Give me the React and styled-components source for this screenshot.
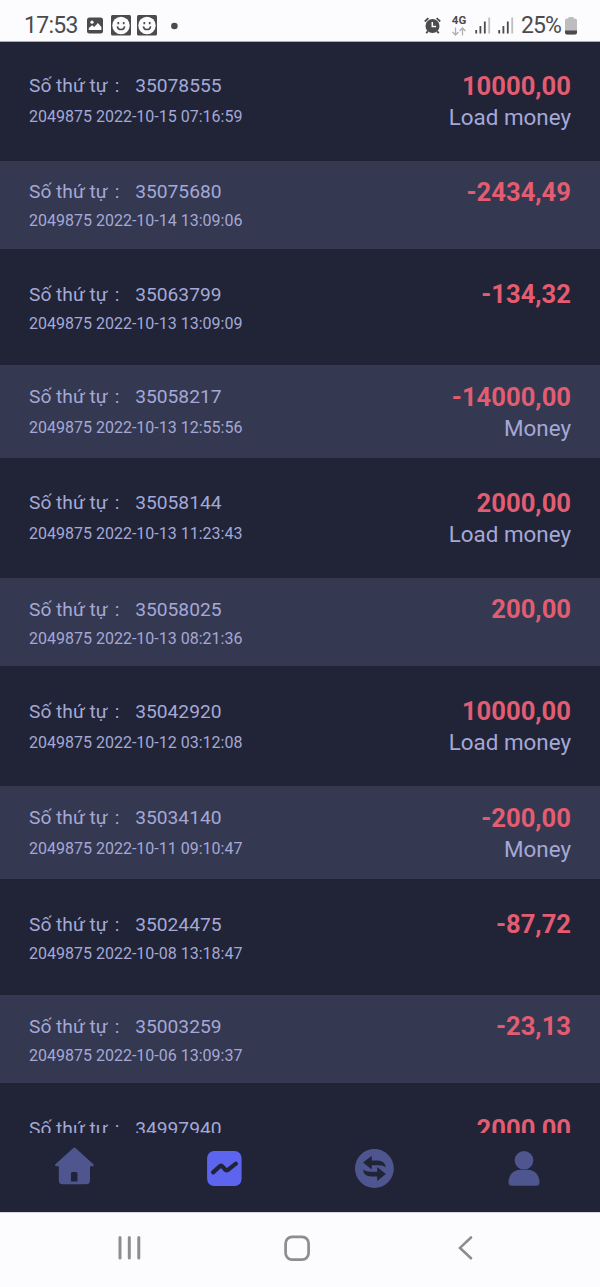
import React from 'react';
import styled, { createGlobalStyle } from 'styled-components';

const GlobalStyle = createGlobalStyle`
  * {
    box-sizing: border-box;
  }
  body {
    margin: 0;
    background-color: #202436;
    font-family: Roboto, 'Noto Sans CJK TC', sans-serif;
  }
`;

const Screen = styled.div`
  display: flex;
  flex-direction: column;
  width: 600px;
  height: 1287px;
  overflow: hidden;
  background-color: #202436;
`;

const StatusBar = styled.header`
  display: flex;
  justify-content: space-between;
  flex: none;
  height: 42px;
  padding: 9px 23px 0 24px;
  background-color: #fcfcfe;
  border-bottom: 1px solid #a9a9b3;
  color: #4b4b4d;
`;

const StatusGroup = styled.div`
  display: flex;
  align-items: center;
  height: 33px;
`;

const Clock = styled.span`
  width: 62px;
  font-size: 23px;
  line-height: 33px;
  letter-spacing: -0.7px;
  white-space: nowrap;
`;

const Battery = styled.span`
  margin-left: 7px;
  width: 43px;
  font-size: 23px;
  line-height: 33px;
  letter-spacing: -0.9px;
  white-space: nowrap;
`;

const StatusIcon = styled.svg`
  display: block;
  flex: none;
  margin-left: ${({ $gap }) => $gap || 0}px;
`;

const Network = styled.div`
  display: flex;
  flex-direction: column;
  align-items: center;
  gap: 1px;
  width: 16px;
  margin-left: 10px;
  font-size: 11.5px;
  font-weight: 700;
  line-height: 11px;
`;

const List = styled.ul`
  flex: none;
  height: 1091px;
  margin: 0;
  padding: 0;
  overflow: hidden;
  list-style: none;
`;

const ListItem = styled.li`
  display: flow-root;
  height: ${({ $tall }) => ($tall ? 92.3 : 88.3)}px;
  margin: ${({ $lit }) => ($lit ? '0' : '14px 0')};
  padding: 14.3px 29px 0;
  background-color: ${({ $lit }) => ($lit ? '#343850' : 'transparent')};
  color: #a5a8d6;

  &:first-child {
    margin-top: 12.4px;
  }
`;

const Line = styled.div`
  display: flex;
  align-items: center;
  justify-content: space-between;
  height: ${({ $height }) => $height}px;
  white-space: pre;
`;

const OrderNumber = styled.span`
  display: flex;
  padding-top: 1px;
  font-size: 19.2px;
  line-height: 28px;
`;

const Colon = styled.span`
  width: 27.5px;
  padding-left: 7px;
`;

const OrderDate = styled.span`
  padding-top: 1px;
  font-size: 16px;
  line-height: 20px;
`;

const Amount = styled.span`
  color: #e25d71;
  font-size: 25.6px;
  font-weight: 700;
  line-height: 30px;
`;

const Kind = styled.span`
  font-size: 22.4px;
  line-height: 26px;
`;

const TabBar = styled.nav`
  display: grid;
  grid-template-columns: repeat(4, 1fr);
  justify-items: center;
  flex: none;
  height: 79px;
  padding-top: 13px;
`;

const SystemBar = styled.footer`
  display: flex;
  align-items: center;
  flex: 1;
  padding: 0 0 4px 109px;
  background-color: #fcfcfe;
  border-top: 1px solid #d5d7e4;
`;

const SystemIcon = styled.svg`
  flex: none;
  margin-right: ${({ $gap }) => $gap || 0}px;
`;

const orders = [
  { id: '35078555', date: '2022-10-15 07:16:59', amount: '10000,00', kind: 'Load money' },
  { id: '35075680', date: '2022-10-14 13:09:06', amount: '-2434,49' },
  { id: '35063799', date: '2022-10-13 13:09:09', amount: '-134,32' },
  { id: '35058217', date: '2022-10-13 12:55:56', amount: '-14000,00', kind: 'Money' },
  { id: '35058144', date: '2022-10-13 11:23:43', amount: '2000,00', kind: 'Load money' },
  { id: '35058025', date: '2022-10-13 08:21:36', amount: '200,00' },
  { id: '35042920', date: '2022-10-12 03:12:08', amount: '10000,00', kind: 'Load money' },
  { id: '35034140', date: '2022-10-11 09:10:47', amount: '-200,00', kind: 'Money' },
  { id: '35024475', date: '2022-10-08 13:18:47', amount: '-87,72' },
  { id: '35003259', date: '2022-10-06 13:09:37', amount: '-23,13' },
  { id: '34997940', amount: '2000,00' },
];

function SmileIcon({ gap }) {
  return (
    <StatusIcon $gap={gap} width='20' height='21' viewBox='0 0 20 21'>
      <rect width='20' height='20.5' rx='1.5' fill='#4b4b4d' />
      <circle cx='10' cy='10.5' r='8.7' fill='#fcfcfe' />
      <path d='M7.3 7v2.2M12.7 7v2.2' stroke='#4b4b4d' strokeWidth='1.7' />
      <path d='M6.4 11.3c.6 4.3 6.6 4.3 7.2 0' fill='none' stroke='#4b4b4d' strokeWidth='1.6' />
    </StatusIcon>
  );
}

function SignalIcon({ gap }) {
  return (
    <StatusIcon $gap={gap} width='16' height='17' viewBox='0 0 16 17'>
      <path d='M1.2 13v3.5M5.4 9v7.5M9.8 4.5v12' stroke='#4b4b4d' strokeWidth='1.8' />
      <path d='M14.2.5v16' stroke='#bdbdc0' strokeWidth='1.8' />
    </StatusIcon>
  );
}

function Status() {
  return (
    <StatusBar>
      <StatusGroup>
        <Clock>17:53</Clock>
        <StatusIcon $gap={1} width='16' height='17' viewBox='0 0 16 17'>
          <rect y='.5' width='16' height='16' rx='2.5' fill='#4b4b4d' />
          <circle cx='5' cy='5.2' r='1.6' fill='#fcfcfe' />
          <path d='M1.8 13V11l3.4-2.8 2 1.8 3.7-4.1 3.5 4V13z' fill='#fcfcfe' />
        </StatusIcon>
        <SmileIcon gap={8} />
        <SmileIcon gap={6} />
        <StatusIcon $gap={14} width='7' height='8' viewBox='0 0 7 8'>
          <circle cx='3.4' cy='4' r='3.3' fill='#4b4b4d' />
        </StatusIcon>
      </StatusGroup>
      <StatusGroup>
        <StatusIcon width='17' height='17' viewBox='0 0 17 17'>
          <circle cx='8.5' cy='9' r='7' fill='#4b4b4d' />
          <path
            d='M.8 4.5 4.4 1.1M16.2 4.5 12.6 1.1M4 14.2l-1.8 2M13 14.2l1.8 2'
            stroke='#4b4b4d'
            strokeWidth='1.8'
          />
          <path d='M8.3 5v4.5h3.8' fill='none' stroke='#fcfcfe' strokeWidth='1.5' />
        </StatusIcon>
        <Network>
          4G
          <StatusIcon width='14' height='9' viewBox='0 0 14 9'>
            <path
              d='M3.5.5v7.3M.6 5l2.9 3 2.9-3M10.5 8.5V1.2M7.6 4l2.9-3 2.9 3'
              fill='none'
              stroke='#b0b0b3'
              strokeWidth='1.3'
            />
          </StatusIcon>
        </Network>
        <SignalIcon gap={8} />
        <SignalIcon gap={7} />
        <Battery>25%</Battery>
        <StatusIcon $gap={1} width='12' height='18' viewBox='0 0 12 18'>
          <path
            d='M3.5 0h5v1.6H10a2 2 0 0 1 2 2v11.9a2 2 0 0 1-2 2H2a2 2 0 0 1-2-2V3.6a2 2 0 0 1 2-2h1.5z'
            fill='#bdbdc0'
          />
          <path d='M0 13.5h12v2a2 2 0 0 1-2 2H2a2 2 0 0 1-2-2z' fill='#4b4b4d' />
        </StatusIcon>
      </StatusGroup>
    </StatusBar>
  );
}

function Tabs() {
  return (
    <TabBar>
      <svg width='40' height='44' viewBox='0.6 0 40 44'>
        <path
          d='M18.9 1.9Q20 1 21.1 1.9L39 18.2Q39.8 20 38.3 20.3H35.600V34.500Q35.600 38.200 31.900 38.200H8.100Q4.400 38.200 4.400 34.500V20.300H1.700Q.2 20 1 18.200ZM18 26Q16.500 26 16.500 27.500V35.500H23.100V27.500Q23.100 26 21.600 26Z'
          fill='#4f568f'
          fillRule='evenodd'
        />
      </svg>
      <svg width='40' height='44' viewBox='0.6 0 40 44'>
        <rect x='2.7' y='5' width='34.5' height='35' rx='7' fill='#5d65ef' />
        <path
          d='M8.7 26.4 15.5 20.2Q16.7 19.3 17.9 20.3L21.2 23.900Q22.300 24.900 23.500 23.900L31.500 17.700'
          fill='none'
          stroke='#202436'
          strokeWidth='4.2'
          strokeLinecap='round'
        />
      </svg>
      <svg width='40' height='44' viewBox='0.5 0 40 44'>
        <circle cx='19.9' cy='22.5' r='19.4' fill='#4f568f' />
        <path
          d='M8.5 16.6 17.3 9.8V14.4H23Q30.5 14.4 31.3 21.2Q28.5 19.2 24 19.2H17.3V23.5ZM31.4 28 22.7 35V30.4H17Q9.3 30.4 8.5 23.4Q11.5 25.7 16 25.7H22.7V21Z'
          fill='#202436'
        />
      </svg>
      <svg width='40' height='44' viewBox='0.5 0 40 44'>
        <circle cx='19.5' cy='14.3' r='9.3' fill='#4f568f' />
        <path
          d='M4 36.5C4 29 9 23.7 16 23.7H23C30 23.7 35 29 35 36.5Q35 39.8 31.5 39.8H7.5Q4 39.8 4 36.5Z'
          fill='#4f568f'
        />
      </svg>
    </TabBar>
  );
}

function App() {
  return (
    <Screen>
      <GlobalStyle />
      <Status />
      <List>
        {orders.map((order, index) => (
          <ListItem key={order.id} $tall={Boolean(order.kind)} $lit={index % 2 === 1}>
            <Line $height={34}>
              <OrderNumber>
                Số thứ tự
                <Colon>:</Colon>
                {order.id}
              </OrderNumber>
              <Amount>{order.amount}</Amount>
            </Line>
            {order.date && (
              <Line $height={order.kind ? 28 : 24}>
                <OrderDate>2049875 {order.date}</OrderDate>
                {order.kind && <Kind>{order.kind}</Kind>}
              </Line>
            )}
          </ListItem>
        ))}
      </List>
      <Tabs />
      <SystemBar>
        <SystemIcon $gap={132} width='40' height='32' viewBox='0 0 40 32'>
          <path
            d='M11 5.5V26M20.3 5.5V26M29.8 5.5V26'
            stroke='#8d8d90'
            strokeWidth='3'
            strokeLinecap='round'
          />
        </SystemIcon>
        <SystemIcon $gap={137} width='32' height='32' viewBox='0 0 32 32'>
          <rect
            x='4.6'
            y='4.9'
            width='23'
            height='22.7'
            rx='6.5'
            fill='none'
            stroke='#8d8d90'
            strokeWidth='2.7'
          />
        </SystemIcon>
        <SystemIcon width='30' height='32' viewBox='0 0 30 32'>
          <path
            d='M21 5.500 10 15.900 21 26.300'
            fill='none'
            stroke='#8d8d90'
            strokeWidth='2.6'
            strokeLinecap='round'
          />
        </SystemIcon>
      </SystemBar>
    </Screen>
  );
}

export default App;
